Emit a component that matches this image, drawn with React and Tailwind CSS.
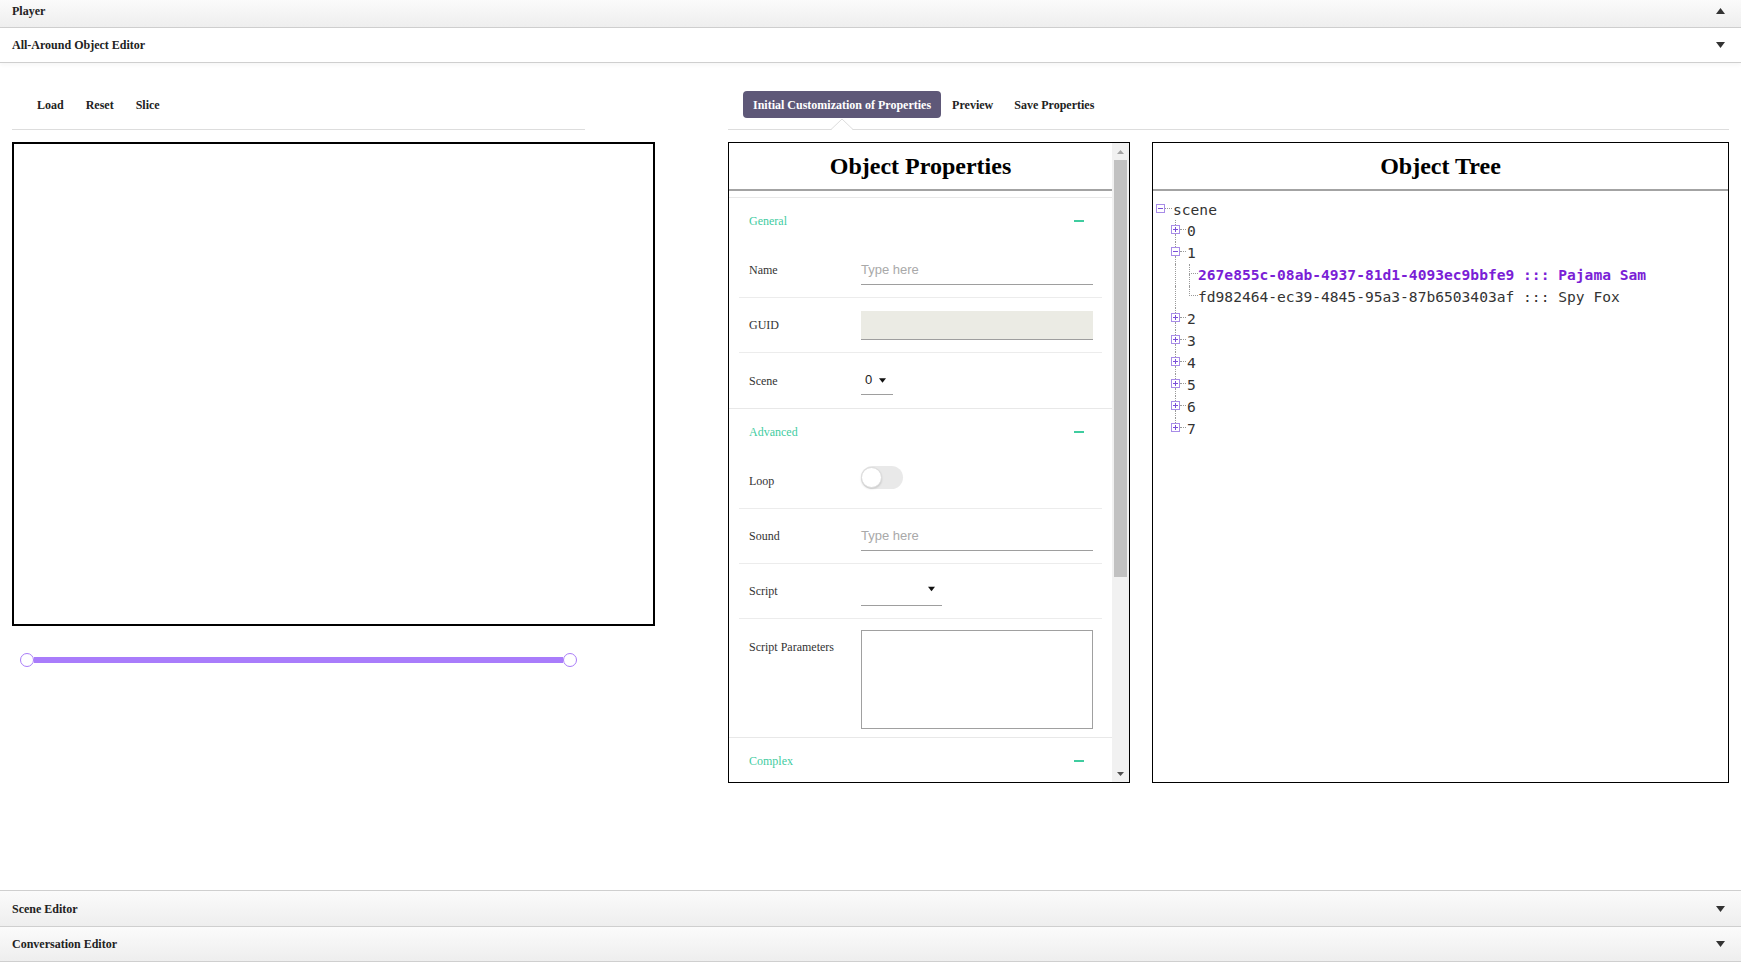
import React from 'react';

const serif = "font-['Liberation_Serif','Times_New_Roman',serif]";
const dot = 'border-dotted border-[#9a9a9a]';

const Arrow = ({ up, color = '#333', w = 9, h = 6 }) => (
  <svg width={w} height={h} viewBox="0 0 9 6">
    <path d={up ? 'M0 6L4.5 0L9 6Z' : 'M0 0L9 0L4.5 6Z'} fill={color} />
  </svg>
);

// accordion header bar
const Bar = ({ title, up, className }) => (
  <div className={`flex items-center justify-between pl-[12px] pr-[16px] text-[12px] font-bold text-[#222] ${className}`}>
    <span>{title}</span>
    <Arrow up={up} />
  </div>
);

const TreeBox = ({ open }) => (
  <svg width="9" height="9" viewBox="0 0 9 9" className="shrink-0">
    <rect x="0.5" y="0.5" width="8" height="8" fill="white" stroke="#a88ce8" />
    <path d="M2 4.5h5" stroke="#7b4fd8" />
    {!open && <path d="M4.5 2v5" stroke="#7b4fd8" />}
  </svg>
);

const L1Row = ({ label, open, last }) => (
  <div className="flex h-[22px] items-center">
    <div className="flex w-[9px] flex-col items-center self-stretch">
      <div className={`h-[5px] border-l ${dot}`} />
      <TreeBox open={open} />
      <div className={last ? 'flex-1' : `flex-1 border-l ${dot}`} />
    </div>
    <div className={`mb-[3px] w-[6px] border-t ${dot}`} />
    <span className="ml-[1px]">{label}</span>
  </div>
);

const L2Row = ({ children, last, selected }) => (
  <div className="flex h-[22px] items-center">
    <div className="flex w-[9px] justify-center self-stretch">
      <div className={`border-l ${dot}`} />
    </div>
    <div className="w-[9px]" />
    <div className="flex w-[9px] flex-col self-stretch">
      <div className={`h-[10px] border-b border-l ${dot}`} />
      <div className={last ? 'flex-1' : `flex-1 border-l ${dot}`} />
    </div>
    <span className={selected ? 'font-bold text-[#7a1ed6]' : ''}>{children}</span>
  </div>
);

const Section = ({ title }) => (
  <div className="flex h-[45px] items-center justify-between pl-[20px] pr-[28px] text-[12px] text-[#3fcc9f]">
    <span>{title}</span>
    <div className="h-[2px] w-[10px] bg-[#3fcc9f]" />
  </div>
);

const Row = ({ label, children, last, className = 'h-[55px] items-center' }) => (
  <div className={`mx-[10px] flex pl-[10px] ${last ? '' : 'border-b border-[#ececec]'} ${className}`}>
    <div className="w-[112px] shrink-0 text-[12px] text-[#333]">{label}</div>
    {children}
  </div>
);

const TextInput = () => (
  <div className="flex h-[29px] w-[232px] items-center border-b border-[#9e9e9e] font-['Liberation_Sans',Arial,sans-serif] text-[13px] text-[#a9a9a9]">
    Type here
  </div>
);

const Tab = ({ children, active }) => (
  <div
    className={`relative flex h-[27px] items-center px-[10px] text-[12px] font-bold ${
      active ? 'rounded-[4px] bg-[#5e5878] text-white' : 'text-[#222]'
    }`}
  >
    {children}
    {active && (
      <svg className="absolute left-1/2 top-full -translate-x-1/2" width="22" height="12" viewBox="0 0 22 12">
        <path d="M0 12L11 1L22 12Z" fill="white" />
        <path d="M0 11.5L11 1L22 11.5" fill="none" stroke="#dcdcdc" />
      </svg>
    )}
  </div>
);

const PanelTitle = ({ children }) => (
  <div className="flex h-[48px] shrink-0 items-center justify-center border-b-2 border-[#a3a3a3] text-[24px] font-bold text-black">
    {children}
  </div>
);

export default function App() {
  return (
    <div className={`h-[965px] w-[1741px] overflow-hidden bg-white ${serif}`}>
      <Bar
        title="Player"
        up
        className="h-[28px] border-b border-[#cfcfcf] bg-linear-to-b from-[#fbfbfb] to-[#eeeeee] pb-[6px]"
      />
      <Bar
        title="All-Around Object Editor"
        className="relative h-[35px] border-b border-[#cfcfcf] bg-white shadow-[0_2px_4px_rgba(0,0,0,0.04)]"
      />

      <div className="flex h-[827px] gap-[73px] px-[12px]">
        {/* left column */}
        <div className="flex w-[643px] flex-col">
          <div className="flex w-[573px] gap-[2px] border-b border-[#dddddd] pb-[11px] pl-[15px] pt-[28px]">
            <Tab>Load</Tab>
            <Tab>Reset</Tab>
            <Tab>Slice</Tab>
          </div>
          <div className="mt-[12px] h-[484px] border-2 border-black" />
          <div className="ml-[8px] mt-[27px] flex w-[557px] items-center">
            <div className="h-[14px] w-[14px] shrink-0 rounded-full border border-[#a97cf8] bg-white" />
            <div className="h-[6px] flex-1 bg-[#a97cfb]" />
            <div className="h-[14px] w-[14px] shrink-0 rounded-full border border-[#a97cf8] bg-white" />
          </div>
        </div>

        {/* right column */}
        <div className="flex w-[1001px] flex-col">
          <div className="flex gap-[1px] border-b border-[#dddddd] pb-[11px] pl-[15px] pt-[28px]">
            <Tab active>Initial Customization of Properties</Tab>
            <Tab>Preview</Tab>
            <Tab>Save Properties</Tab>
          </div>

          <div className="mt-[12px] flex gap-[22px]">
            {/* Object Properties */}
            <div className="flex h-[641px] w-[402px] overflow-hidden border border-black">
              <div className="flex flex-1 flex-col overflow-hidden">
                <PanelTitle>Object Properties</PanelTitle>
                <div className="mt-[6px] border-t border-[#e8e8e8]">
                  <Section title="General" />
                  <Row label="Name">
                    <TextInput />
                  </Row>
                  <Row label="GUID">
                    <div className="h-[29px] w-[232px] border-b border-[#9e9e9e] bg-[#ebebe4]" />
                  </Row>
                  <Row label="Scene" last>
                    <div className="flex h-[29px] w-[32px] items-center gap-[7px] border-b border-[#9e9e9e] pl-[4px] font-['Liberation_Sans',Arial,sans-serif] text-[13px] text-[#222]">
                      <span>0</span>
                      <Arrow color="#111" w={7} h={5} />
                    </div>
                  </Row>
                </div>
                <div className="border-t border-[#e8e8e8]">
                  <Section title="Advanced" />
                  <Row label="Loop">
                    <div className="mb-[8px] flex h-[23px] w-[42px] items-center rounded-full bg-[#e9e9e9]">
                      <div className="h-[21px] w-[21px] rounded-full border border-[#dcdcdc] bg-white shadow-[0_1px_2px_rgba(0,0,0,0.15)]" />
                    </div>
                  </Row>
                  <Row label="Sound">
                    <TextInput />
                  </Row>
                  <Row label="Script">
                    <div className="flex h-[29px] w-[81px] items-center justify-end border-b border-[#9e9e9e] pb-[3px] pr-[7px]">
                      <Arrow color="#111" w={7} h={6} />
                    </div>
                  </Row>
                  <Row label={<div className="mt-[9px] leading-[16px]">Script Parameters</div>} last className="h-[118px] items-start pt-[11px]">
                    <div className="h-[99px] w-[232px] border border-[#a0a0a0]" />
                  </Row>
                </div>
                <div className="border-t border-[#e8e8e8]">
                  <Section title="Complex" />
                </div>
              </div>
              {/* scrollbar */}
              <div className="flex w-[17px] shrink-0 flex-col bg-[#f1f1f1]">
                <div className="flex h-[17px] items-center justify-center">
                  <svg width="7" height="4" viewBox="0 0 7 4"><path d="M0 4L3.5 0L7 4Z" fill="#a3a3a3" /></svg>
                </div>
                <div className="mx-[2px] h-[417px] bg-[#c1c1c1]" />
                <div className="flex-1" />
                <div className="flex h-[17px] items-center justify-center">
                  <svg width="7" height="4" viewBox="0 0 7 4"><path d="M0 0L7 0L3.5 4Z" fill="#505050" /></svg>
                </div>
              </div>
            </div>

            {/* Object Tree */}
            <div className="flex h-[641px] w-[577px] flex-col border border-black">
              <PanelTitle>Object Tree</PanelTitle>
              <div className="pt-[9px] font-['DejaVu_Sans_Mono',monospace] text-[14.6px] text-[#333]">
                <div className="flex h-[20px] items-center pl-[3px]">
                  <div className="mb-[3px]">
                    <TreeBox open />
                  </div>
                  <div className={`mb-[3px] w-[7px] border-t ${dot}`} />
                  <span className="ml-[1px]">scene</span>
                </div>
                <div className="ml-[18px]">
                  <L1Row label="0" />
                  <L1Row label="1" open />
                  <L2Row selected>267e855c-08ab-4937-81d1-4093ec9bbfe9 ::: Pajama Sam</L2Row>
                  <L2Row last>fd982464-ec39-4845-95a3-87b6503403af ::: Spy Fox</L2Row>
                  <L1Row label="2" />
                  <L1Row label="3" />
                  <L1Row label="4" />
                  <L1Row label="5" />
                  <L1Row label="6" />
                  <L1Row label="7" last />
                </div>
              </div>
            </div>
          </div>
        </div>
      </div>

      <Bar
        title="Scene Editor"
        className="h-[36px] border-t border-[#cfcfcf] bg-linear-to-b from-[#fbfbfb] to-[#eeeeee]"
      />
      <Bar
        title="Conversation Editor"
        className="h-[36px] border-y border-[#cfcfcf] bg-linear-to-b from-[#fbfbfb] to-[#eeeeee]"
      />
    </div>
  );
}
